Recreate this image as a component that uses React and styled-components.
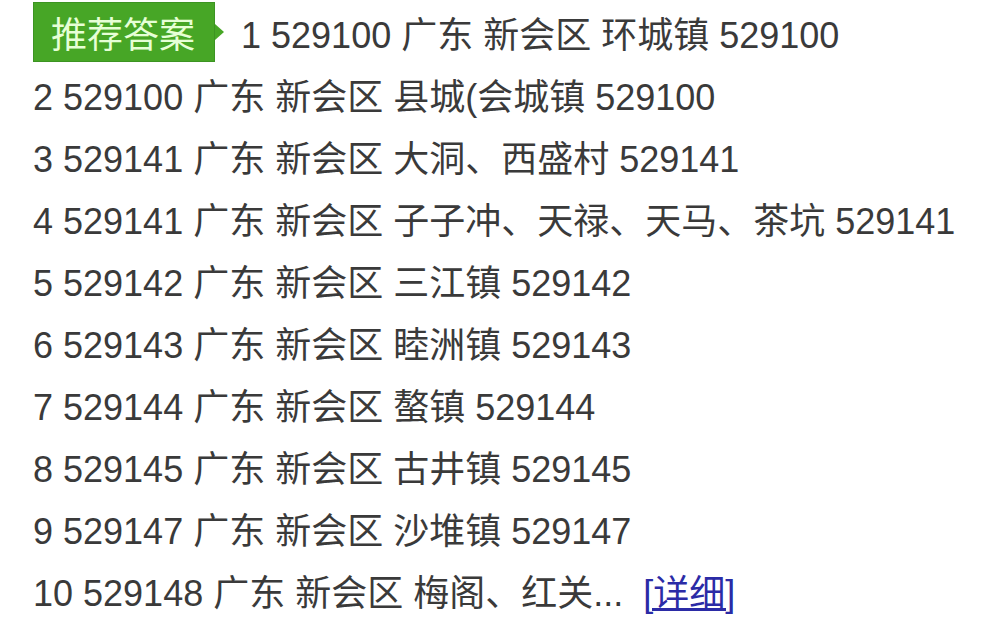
import React from "react";
import styled, { createGlobalStyle } from "styled-components";

const GlobalStyle = createGlobalStyle`
  html, body {
    margin: 0;
    padding: 0;
    background: #ffffff;
  }
`;

const rows = [
  "1 529100 广东 新会区 环城镇 529100",
  "2 529100 广东 新会区 县城(会城镇 529100",
  "3 529141 广东 新会区 大洞、西盛村 529141",
  "4 529141 广东 新会区 子子冲、天禄、天马、茶坑 529141",
  "5 529142 广东 新会区 三江镇 529142",
  "6 529143 广东 新会区 睦洲镇 529143",
  "7 529144 广东 新会区 螯镇 529144",
  "8 529145 广东 新会区 古井镇 529145",
  "9 529147 广东 新会区 沙堆镇 529147",
];

const App = () => {
  return (
    <>
      <GlobalStyle />
      <AnswerList>
        {rows.map((text, i) => (
          <Row key={i}>
            {i === 0 && <Badge>推荐答案</Badge>}
            {text}
          </Row>
        ))}
        <Row>
          10 529148 广东 新会区 梅阁、红关...
          <MoreLink href="#">[详细]</MoreLink>
        </Row>
      </AnswerList>
    </>
  );
};

export default App;

const AnswerList = styled.div`
  padding: 1px 0 0 33px;
  font-family: "Liberation Sans", "Noto Sans CJK SC", sans-serif;
  font-size: 36px;
  color: #3a3a3a;
`;

const Row = styled.div`
  display: flex;
  align-items: center;
  height: 62px;
  white-space: pre;
`;

const Badge = styled.span`
  position: relative;
  display: flex;
  align-items: center;
  height: 60px;
  margin-right: 26px;
  padding: 0 19px 0 17px;
  box-sizing: border-box;
  background: #47a626;
  border: 1px solid #3c9422;
  color: #e6ffd6;
  font-size: 36px;

  &::after {
    content: "";
    position: absolute;
    right: -10px;
    top: 50%;
    margin-top: -8px;
    border-style: solid;
    border-width: 8px 0 8px 9px;
    border-color: transparent transparent transparent #47a626;
  }
`;

const MoreLink = styled.a`
  margin-left: 20px;
  color: #2b2ba6;
  text-decoration: underline;
`;
